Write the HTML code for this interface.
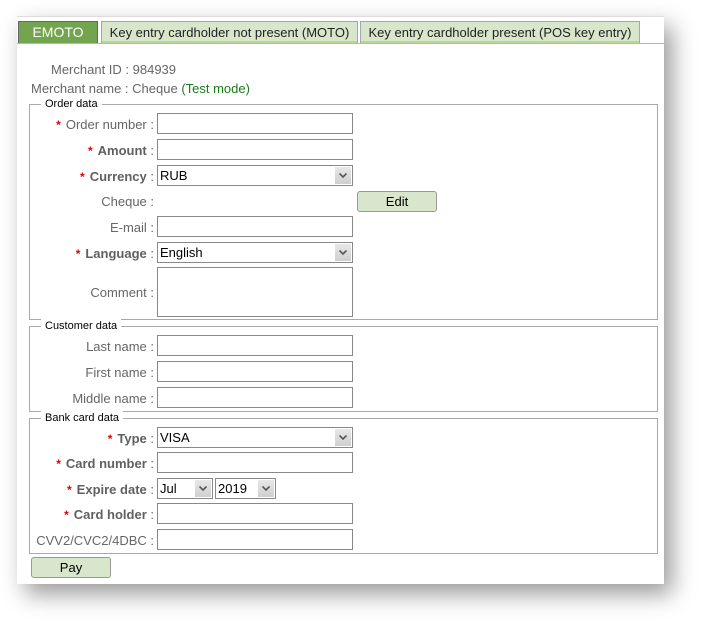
<!DOCTYPE html>
<html><head><meta charset="utf-8"><style>
body{margin:0;width:712px;height:631px;background:#fff;position:relative;overflow:hidden;font-family:"Liberation Sans",Arial,sans-serif;font-size:13px;color:#666}
.panel{position:absolute;left:17px;top:16px;width:647px;height:567px;background:#fff;border-top:1px solid #ddd;box-shadow:8px 10px 22px rgba(0,0,0,.4)}
.a{position:absolute}
.tab{position:absolute;top:21px;height:21px;border:1px solid #a0a8b0;border-bottom:none;background:#d8e7cc;color:#222;font-size:13px;line-height:21px;text-align:center;box-shadow:inset 0 -2px 0 #b8d890}
.tab.on{background:#72a54e;color:#fff;font-size:14px;box-shadow:none;border-color:#666}
.tabline{position:absolute;left:17px;top:43px;width:647px;height:1px;background:#b0b8c0}
.fs{position:absolute;left:29px;width:627px;border:1px solid #a9a9a9}
.lg{position:absolute;left:11px;top:-8px;background:#fff;padding:0 4px;color:#000;font-size:11px;line-height:14px}
.lb{position:absolute;right:558px;text-align:right;white-space:nowrap;line-height:23px}
.lb b{color:#606060}
.st{color:#e00000;font-weight:bold;margin-right:5px;font-size:12px}
.in{position:absolute;left:157px;width:194px;height:19px;border:1px solid #888;background:#fff}
.sel{position:absolute;height:19px;border:1px solid #888;background:#fff;color:#000;line-height:19px;padding-left:2px;box-sizing:content-box;font-size:13px}
.sel i{position:absolute;right:1px;top:1px;width:16px;height:17px;background:linear-gradient(#e8e8e8,#cfcfcf)}
.sel i svg{position:absolute;left:4px;top:6px}
.btn{position:absolute;width:78px;height:19px;border:1px solid #999;border-radius:3px;background:#d8e7cc;color:#000;text-align:center;line-height:19px;font-size:13px}
</style></head><body>
<div class="panel"></div>
<div class="tab on" style="left:18px;width:78px">EMOTO</div>
<div class="tab" style="left:101px;width:255px">Key entry cardholder not present (MOTO)</div>
<div class="tab" style="left:360px;width:278px">Key entry cardholder present (POS key entry)</div>
<div class="tabline"></div>

<div class="a" style="left:51px;top:62px">Merchant ID : 984939</div>
<div class="a" style="left:31px;top:81px">Merchant name : Cheque <span style="color:#1a7a1a">(Test mode)</span></div>

<div class="fs" style="top:104px;height:214px"><div class="lg">Order data</div></div>
<div class="lb" style="top:113px"><span class="st">*</span>Order number :</div>
<div class="in" style="top:113px"></div>
<div class="lb" style="top:139px"><span class="st">*</span><b>Amount</b> :</div>
<div class="in" style="top:139px"></div>
<div class="lb" style="top:165px"><span class="st">*</span><b>Currency</b> :</div>
<div class="sel" style="left:157px;top:165px;width:192px">RUB<i><svg width="8" height="5"><path d="M0.5 0.5L4 4L7.5 0.5" stroke="#555" stroke-width="1.6" fill="none"/></svg></i></div>
<div class="lb" style="top:190px">Cheque :</div>
<div class="btn" style="left:357px;top:191px">Edit</div>
<div class="lb" style="top:216px">E-mail :</div>
<div class="in" style="top:216px"></div>
<div class="lb" style="top:242px"><span class="st">*</span><b>Language</b> :</div>
<div class="sel" style="left:157px;top:242px;width:192px">English<i><svg width="8" height="5"><path d="M0.5 0.5L4 4L7.5 0.5" stroke="#555" stroke-width="1.6" fill="none"/></svg></i></div>
<div class="lb" style="top:281px">Comment :</div>
<div class="in" style="top:267px;height:48px"></div>

<div class="fs" style="top:326px;height:84px"><div class="lg">Customer data</div></div>
<div class="lb" style="top:335px">Last name :</div>
<div class="in" style="top:335px"></div>
<div class="lb" style="top:361px">First name :</div>
<div class="in" style="top:361px"></div>
<div class="lb" style="top:387px">Middle name :</div>
<div class="in" style="top:387px"></div>

<div class="fs" style="top:418px;height:134px"><div class="lg">Bank card data</div></div>
<div class="lb" style="top:427px"><span class="st">*</span><b>Type</b> :</div>
<div class="sel" style="left:157px;top:427px;width:192px">VISA<i><svg width="8" height="5"><path d="M0.5 0.5L4 4L7.5 0.5" stroke="#555" stroke-width="1.6" fill="none"/></svg></i></div>
<div class="lb" style="top:452px"><span class="st">*</span><b>Card number</b> :</div>
<div class="in" style="top:452px"></div>
<div class="lb" style="top:478px"><span class="st">*</span><b>Expire date</b> :</div>
<div class="sel" style="left:157px;top:478px;width:52px">Jul<i><svg width="8" height="5"><path d="M0.5 0.5L4 4L7.5 0.5" stroke="#555" stroke-width="1.6" fill="none"/></svg></i></div>
<div class="sel" style="left:215px;top:478px;width:57px">2019<i><svg width="8" height="5"><path d="M0.5 0.5L4 4L7.5 0.5" stroke="#555" stroke-width="1.6" fill="none"/></svg></i></div>
<div class="lb" style="top:503px"><span class="st">*</span><b>Card holder</b> :</div>
<div class="in" style="top:503px"></div>
<div class="lb" style="top:529px">CVV2/CVC2/4DBC :</div>
<div class="in" style="top:529px"></div>

<div class="btn" style="left:31px;top:557px">Pay</div>
</body></html>
